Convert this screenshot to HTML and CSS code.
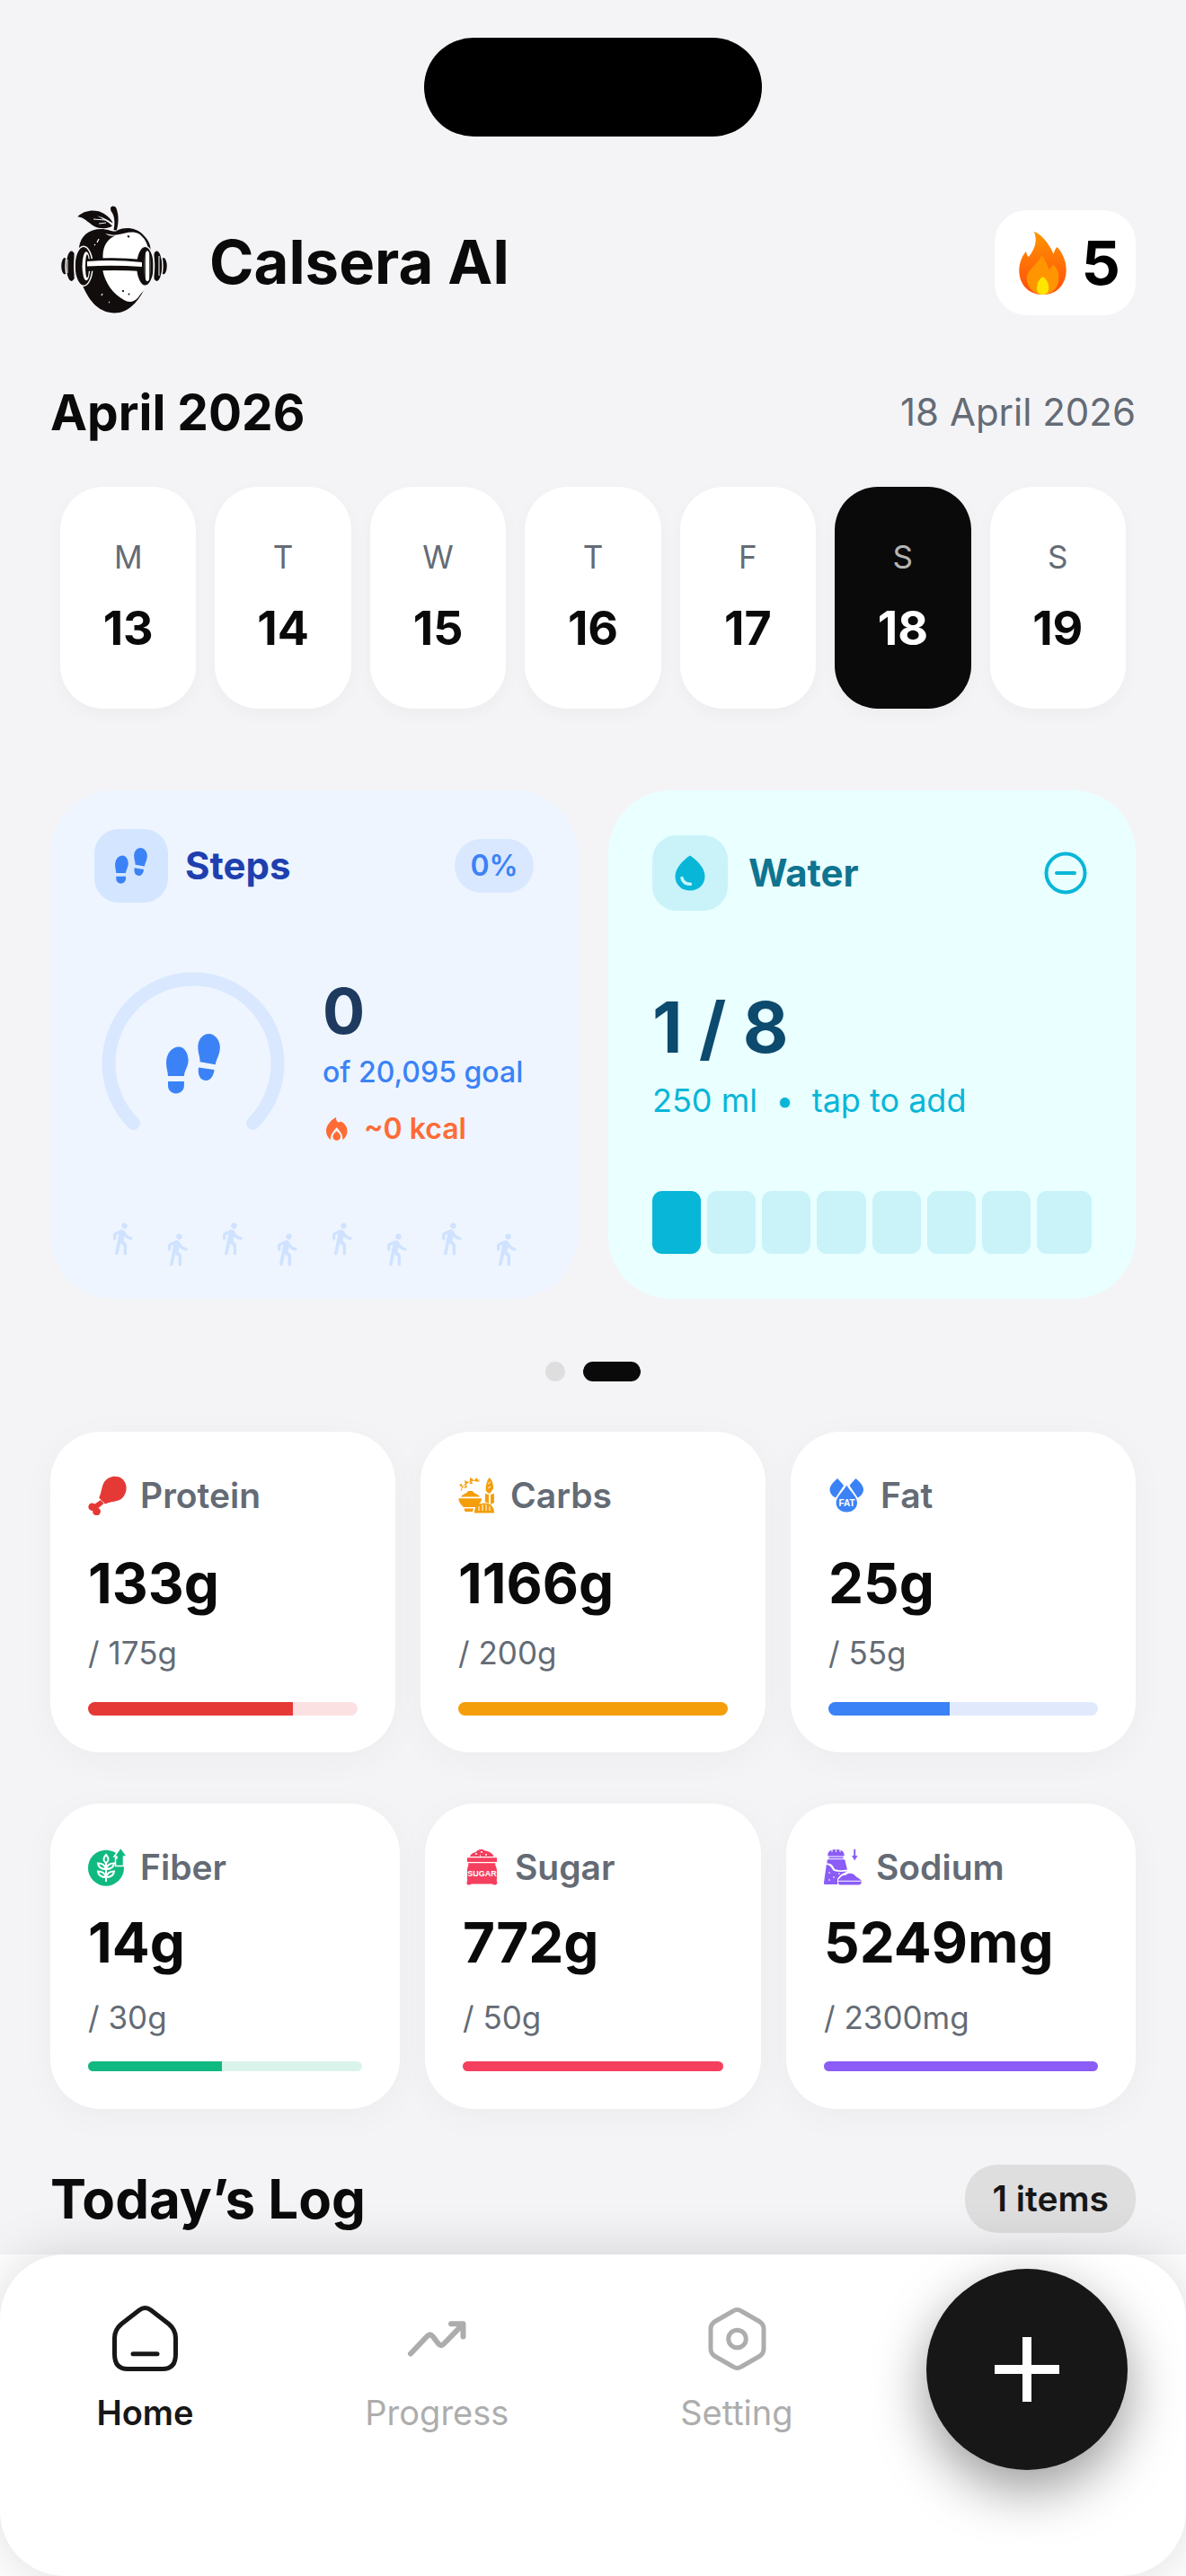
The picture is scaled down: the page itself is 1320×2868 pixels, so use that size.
FILE: index.html
```html
<!DOCTYPE html>
<html lang="en">
<head>
<meta charset="utf-8">
<meta name="viewport" content="width=device-width, initial-scale=1">
<title>Calsera AI</title>
<link rel="stylesheet" href="styles.css">
</head>
<body>
<svg class="sprite" aria-hidden="true">
  <symbol id="feet" viewBox="0 0 60 67">
    <path d="M14 14.4C20.500 14.400 24.600 22 24.600 29.700C24.600 36 20.500 40 19.900 47H2C1.800 42 0 38 0 32.400C0 21 7 14.400 14 14.400Z"/>
    <path d="M2 53H19.900V57.500C19.900 63 15.500 66.400 10.900 66.400C6 66.400 2 63 2 57.500Z"/>
    <path d="M47.500 0C54.500 0 60.500 8 59.800 16.300C59.500 23 56 28 54.700 34.300L37.700 31.200C37.700 26 35.300 21 35.300 15.200C35.300 7 40 0 47.500 0Z"/>
    <path d="M36 37.400L53.500 40C53 46.500 49.500 52 44.400 51.900C38.500 51.900 34.800 47 36 37.400Z"/>
  </symbol>
  <symbol id="walker" viewBox="0 0 24 24">
    <path d="M13.500 5.500c1.100 0 2-.9 2-2s-.9-2-2-2-2 .9-2 2 .9 2 2 2zM9.800 8.900 7.240 21.810c-.13.61.35 1.190.98 1.190h.08c.47 0 .87-.32.98-.78L10.900 15l2.100 2v5c0 .55.45 1 1 1s1-.45 1-1v-5.640c0-.55-.22-1.070-.62-1.450L12.900 13.500l.6-3c1.070 1.240 2.620 2.130 4.360 2.410.6.09 1.140-.39 1.140-1 0-.49-.36-.9-.84-.98-1.530-.25-2.800-1.150-3.460-2.330l-1-1.600c-.56-.89-1.680-1.250-2.660-.84L7.220 7.780C6.480 8.100 6 8.820 6 9.620V12c0 .55.45 1 1 1s1-.45 1-1V9.600l1.800-.7"/>
  </symbol>
</svg>

<div class="island" aria-hidden="true"></div>

<main class="page">
  <header class="topbar">
    <svg class="logo" viewBox="0 3 120 120" aria-hidden="true">
      <path d="M21 46C23 34 31 26 46 26C53 26 57 29 62 28.500C68 24 82 23 91 31C97 37 100 41 100.500 48L95 90C88 106 76 119.500 60.500 119.500C44 119 33 108 25 89L21 46Z" fill="#120d0d"/>
      <path d="M62 32.500C72 31 80 27 88 31.500C94 36 97 42 98 48V88C94 94 90 97 87 102C82 108 76 108 71 105C58 98 50 85 47.500 73V55C48 44 53 37 61 33.500C56 34 53 33 50 31C54 32 58 33 62 32.500Z" fill="#fff"/>
      <path d="M19.300 12.200C27 5 38 4 46 7.500C53 11 57 15 58.500 19.500C51 14 46 13 41 11C47 15 54 18 58 22.500C53 26 44 26 38 23C30 18 27 13 19.300 12.200Z" fill="#120d0d"/>
      <path d="M37 15L50 16M43 20L51 19" stroke="#f4f4f7" stroke-width="1" fill="none"/>
      <path d="M56 3C56 0 61-.5 62.500 3C65.500 11 65 20 62.800 27.500L59.500 27C61.500 17 60 10 56.500 6Z" fill="#120d0d"/>
      <g fill="#120d0d" stroke="#f4f4f7" stroke-width="1.500">
        <ellipse cx="5" cy="67.200" rx="4.500" ry="10"/><ellipse cx="12.500" cy="67.200" rx="6.500" ry="17.500"/>
        <ellipse cx="115" cy="67.200" rx="4.500" ry="10"/><ellipse cx="107.500" cy="67.200" rx="6.500" ry="17.500"/>
        <ellipse cx="26" cy="67.200" rx="10" ry="22"/><ellipse cx="94.500" cy="67.200" rx="10" ry="22"/>
      </g>
      <ellipse cx="29" cy="67.200" rx="4.500" ry="16" fill="#fff"/><ellipse cx="30" cy="67.200" rx="2" ry="13" fill="#120d0d"/>
      <ellipse cx="97" cy="67.200" rx="4" ry="17" fill="#fff"/><path d="M94 52V82M100 53V81" stroke="#120d0d" stroke-width="1.500"/>
      <path d="M30 59.500Q60 57 91 60V73Q60 71 30 73Z" fill="#120d0d"/>
      <path d="M30 62Q60 59.500 91 63V68Q60 66 30 67.500Z" fill="#fff"/>
      <path d="M8 60V75M16 54V80M104 53V81M110 56V78" stroke="#fff" stroke-width="1"/>
      <path d="M41 41L43 37M39 43L38 44M46 100L47 98M54 107.500H55" stroke="#fff" stroke-width="1.300"/>
      <path d="M75 33.500L77 35M70 94V96M76 98L77 99" stroke="#120d0d" stroke-width="1.800"/>
    </svg>
    <h1 class="brand">Calsera AI</h1>
    <button class="streak" type="button" aria-label="5 day streak">
      <svg class="streak-flame" viewBox="0 0 53 71" aria-hidden="true">
        <defs><linearGradient id="heat" x1="0" y1="0" x2="0" y2="1"><stop offset="0" stop-color="#ff9500"/><stop offset="1" stop-color="#ff4d0d"/></linearGradient></defs>
        <path fill="url(#heat)" d="M16.700.7C24 3 33 13 38.600 25.700C39.500 23 40 20.500 42.400 18C47 22 53 33 52.700 44C52.500 60 42 71 26.800 71C11 71 .3 60 .3 44C.3 36 3.500 28 7.900 23C8.500 25 9 27.500 10.800 29C16 23 22 12 16.700.7Z"/>
        <path fill="#ff9500" d="M25.200 27.300C29 32 32 38 34 44C35 41 36.500 39 38.200 37.700C42 41 44.500 45 44.500 51C44.500 64 37 70.500 26.800 71C16 70.500 8.800 63 8.800 53C8.800 43 21 38 25.200 27.300Z"/>
        <path fill="#ffe600" d="M26.800 51.300C30 53 33.200 58 33.200 63C33.200 68 31 71 26.800 71C22 71 20 68 20 63C20 58 23 53 26.800 51.300Z"/>
      </svg>
      <span>5</span>
    </button>
  </header>

  <section class="month">
    <h2 class="month-name">April 2026</h2>
    <time class="month-date" datetime="2026-04-18">18 April 2026</time>
  </section>

  <section class="days" aria-label="Week">
    <button class="day" type="button"><span>M</span><b>13</b></button>
    <button class="day" type="button"><span>T</span><b>14</b></button>
    <button class="day" type="button"><span>W</span><b>15</b></button>
    <button class="day" type="button"><span>T</span><b>16</b></button>
    <button class="day" type="button"><span>F</span><b>17</b></button>
    <button class="day day-active" type="button" aria-pressed="true"><span>S</span><b>18</b></button>
    <button class="day" type="button"><span>S</span><b>19</b></button>
  </section>

  <section class="trackers">
    <article class="card steps">
      <div class="card-head">
        <span class="chip-icon"><svg class="feet-small"><use href="#feet"/></svg></span>
        <h3>Steps</h3>
        <span class="percent">0%</span>
      </div>
      <div class="steps-body">
        <div class="gauge">
          <svg class="gauge-arc" viewBox="0 0 204 204" aria-hidden="true"><path d="M35.500 168.500A94 94 0 1 1 168.500 168.500"/></svg>
          <svg class="feet-large"><use href="#feet"/></svg>
        </div>
        <div class="steps-text">
          <p class="steps-count">0</p>
          <p class="steps-goal">of 20,095 goal</p>
          <p class="steps-kcal">
            <svg viewBox="0 0 24 26" aria-hidden="true"><path d="M11 0C11 3 12 5.500 14 5.500C15 5.500 15.500 5 16 4.500C20 6 23.500 10 23.500 15C23.500 19 21.500 23 18.200 25C18.700 21 18 18 11.700 11.300C5.500 18 4.700 21 5.200 25C2 23 0 19 0 15C0 9 5 3 11 0Z"/><path d="M11.700 15.300C14 17.500 16 19 16 21.500A4.300 4.300 0 0 1 7.400 21.500C7.400 19 9.500 17.500 11.700 15.300Z"/></svg>
            ~0 kcal
          </p>
        </div>
      </div>
      <div class="walkers" aria-hidden="true">
        <svg><use href="#walker"/></svg><svg><use href="#walker"/></svg><svg><use href="#walker"/></svg><svg><use href="#walker"/></svg>
        <svg><use href="#walker"/></svg><svg><use href="#walker"/></svg><svg><use href="#walker"/></svg><svg><use href="#walker"/></svg>
      </div>
    </article>

    <article class="card water">
      <div class="card-head">
        <span class="chip-icon"><svg class="drop" viewBox="0 0 34 40" aria-hidden="true"><path d="M17 .5C24 5 33.500 14 33.500 23.500C33.500 33 26.500 39.500 17 39.500S.5 33 .5 23.500C.5 14 10 5 17 .5Z" fill="#08b6d8"/><path d="M8 25.500C8.500 29.500 12.500 32.500 17.500 32.300" stroke="#c9f3f9" stroke-width="3.500" stroke-linecap="round" fill="none"/></svg></span>
        <h3>Water</h3>
        <button class="minus" type="button" aria-label="Remove a glass"><svg viewBox="0 0 48 48" aria-hidden="true"><circle cx="24" cy="24" r="21.500"/><path d="M14 24H34"/></svg></button>
      </div>
      <p class="water-count">1 / 8</p>
      <p class="water-hint">250 ml&nbsp; •&nbsp; tap to add</p>
      <div class="glasses"><i class="full"></i><i></i><i></i><i></i><i></i><i></i><i></i><i></i></div>
    </article>
  </section>

  <div class="pager" aria-hidden="true"><i></i><i class="on"></i></div>

  <section class="macros">
    <article class="macro red">
      <h3><svg viewBox="0 0 44 44" aria-hidden="true"><path d="M12.200 24.500C15 19 15 12 18 7C22 1 31-1.500 37.500 3C44 8 44.500 18 38 25C33 29.500 26 28 19 31.500Z"/><path d="M14 27L17.500 31L11.500 36A4.300 4.300 0 1 1 5.300 39A4.300 4.300 0 1 1 7.500 31.500Z"/></svg>Protein</h3>
      <p class="value">133g</p><p class="goal">/ 175g</p>
      <div class="bar"><i style="width:76%"></i></div>
    </article>
    <article class="macro amber">
      <h3><svg viewBox="0 0 44 44" aria-hidden="true"><path d="M3 17C5 10 12 4 24 5" fill="none" stroke="currentColor" stroke-width="1"/><path d="M1 10L5 14L4 9ZM7 5L8 11L11 7ZM13 2L13 7L17 4ZM20 2L18 6L23 7ZM6 14L10 13L9 10ZM12 9L16 9L15 6Z"/><path d="M3 23.500C5 20 10 20 11 17H16C17 20 22 20 24 23.500ZM.4 25.300H26C26 30 22 33 20 35H6C4 33 .4 30 .4 25.300ZM6.500 36.500H17L16 40H7.500ZM34.700 2C38 5 39 9 39.200 14L35.500 19.500H33L30.500 16C30.500 10 32 5 34.700 2ZM30 20L34 21V31L29.800 29ZM36 21L40 20V30L36 32ZM18 41.500C18 34 22 30.500 29 30.500S40 34 40 41.500Z"/><path d="M23 34V39M27 32V39M31 32V39M35 34V39M33 9L36 7M33 14L36 12" stroke="#fff" stroke-width="1" fill="none"/></svg>Carbs</h3>
      <p class="value">1166g</p><p class="goal">/ 200g</p>
      <div class="bar"><i style="width:100%"></i></div>
    </article>
    <article class="macro blue">
      <h3><svg viewBox="0 0 44 44" aria-hidden="true"><path d="M10 3C12 5 15 8 17 11L8 24.500C3 22 1.500 18 1.500 15C2 10 7 6 10 3ZM30.600 3C28.600 5 25.600 8 23.600 11L32.600 24.500C37.600 22 39 18 39 15C38.600 10 33.600 6 30.600 3ZM20.300 10.700C24 17 32 23 32 30C32 36 27 40.500 20.300 40.500S8.600 36 8.600 30C8.600 23 17 17 20.300 10.700Z"/><text x="20.500" y="33.500" text-anchor="middle" class="icon-text">FAT</text></svg>Fat</h3>
      <p class="value">25g</p><p class="goal">/ 55g</p>
      <div class="bar"><i style="width:45%"></i></div>
    </article>
  </section>

  <section class="macros macros-minor">
    <article class="macro green">
      <h3><svg viewBox="0 0 44 44" aria-hidden="true"><circle cx="20" cy="22.700" r="20"/><path d="M36.300 0L43.500 10H39.500V20.500H30.500V12H32V10H29Z" stroke="#fff" stroke-width="1.500"/><g fill="none" stroke="#fff" stroke-width="2"><path d="M20 38V17M20 8C16.500 12 16.500 14 20 17.500C23.500 14 23.500 12 20 8ZM20 24C13 24 11.500 21 11 17.500C17 17.500 19 20 20 24ZM20 24C27 24 28.500 21 29 17.500C23 17.500 21 20 20 24ZM20 33C13 33 11.500 30 11 26.500C17 26.500 19 29 20 33ZM20 33C27 33 28.500 30 29 26.500C23 26.500 21 29 20 33Z"/></g></svg>Fiber</h3>
      <p class="value">14g</p><p class="goal">/ 30g</p>
      <div class="bar"><i style="width:49%"></i></div>
    </article>
    <article class="macro rose">
      <h3><svg viewBox="0 0 44 44" aria-hidden="true"><path d="M8 10C9 6 13 6 15 4.500C17 1.500 22 1 25 3.500C29 4 33 6 34.500 10ZM5 11.300H38V16H5ZM6 17.200H36.500C35.500 20 38 22 38 25V35C37 37 40 40 37 41.500C34 42 34 40.500 32 40.500H11C9 40.500 8 42 5.500 41.500C3 40 6 37 5 35V25C5 22 7 20 6 17.200Z"/><path d="M14 7H16M20 5H22M25 8H27M19 9H20" stroke="#fff" stroke-width="1.500"/><text x="21.500" y="31.500" text-anchor="middle" class="icon-text">SUGAR</text></svg>Sugar</h3>
      <p class="value">772g</p><p class="goal">/ 50g</p>
      <div class="bar"><i style="width:100%"></i></div>
    </article>
    <article class="macro violet">
      <h3><svg viewBox="0 0 44 44" aria-hidden="true"><path d="M4.500 9.500C3.500 5 7 2 13.500 2S23.500 5 22.500 9.500ZM5.500 10.500H21.500V12.300H5.500ZM4 13.300H23.200L26 24.500C19 26 15 25 12 24C10 19 7 17 3.200 17.500ZM2.800 19C7 19 8.500 23 10.500 25.500C15 27.500 20 27 26 26.500L20 29.500C18 31 16 33 15 35V41H.8C0 41 0 40 0 39ZM16 35.500C19 34 20 30 24 31C27 28 29 29 31 29C34 29 35 33 38 33.500L41.500 36.500V40L39.500 41.500H17.500L16 40ZM33.200 2H35.200V9H37.500L34.200 14.500L31 9H33.200Z"/><path d="M9 2V5M13.500 2V5M18 2V5M5 28H7M10 33H12M5 36H7M16 29H18M15.500 37.300H41" stroke="#fff" stroke-width="1" fill="none"/></svg>Sodium</h3>
      <p class="value">5249mg</p><p class="goal">/ 2300mg</p>
      <div class="bar"><i style="width:100%"></i></div>
    </article>
  </section>

  <section class="log">
    <h2>Today’s Log</h2>
    <span class="log-count">1 items</span>
  </section>
</main>

<div class="dock">
  <nav class="nav">
    <div class="tabs">
      <a class="tab tab-active" href="#home" aria-current="page"><svg viewBox="0 0 80 80" aria-hidden="true"><path d="M34 8Q40.500 3 47 8L67 23.500Q74.500 30 74.500 39V57Q74.500 73.500 60 73.500H21Q6.500 73.500 6.500 57V39Q6.500 30 14 23.500ZM27 56.700H54"/></svg>Home</a>
      <a class="tab" href="#progress"><svg class="bold" viewBox="0 0 80 80" aria-hidden="true"><path d="M11 56.500L29.500 37Q32.500 34 35.500 37L42 45.500Q45 48.500 48 45.500L68 25M56 23.300H69.500V37.500"/></svg>Progress</a>
      <a class="tab" href="#setting"><svg viewBox="0 0 80 80" aria-hidden="true"><path d="M36 9Q40.500 6 45 9L65 20.500Q70 23.500 70 29V51Q70 56.500 65 59.500L45 71Q40.500 74 36 71L16 59.500Q11 56.500 11 51V29Q11 23.500 16 20.500Z"/><circle cx="40.500" cy="40" r="9.800"/></svg>Setting</a>
    </div>
    <button class="fab" type="button" aria-label="Add"><svg viewBox="0 0 72 72" aria-hidden="true"><path d="M36 0V72M0 36H72"/></svg></button>
  </nav>
</div>
</body>
</html>
```

FILE: styles.css
```css
* { box-sizing: border-box; }

body {
  margin: 0;
  min-height: 100vh;
  display: flex;
  flex-direction: column;
  background: #f4f4f7;
  color: #0a0a0a;
  font-family: Inter, "Liberation Sans", sans-serif;
}

h1, h2, h3, p { margin: 0; }
button { border: 0; padding: 0; font: inherit; color: inherit; cursor: pointer; }
a { color: inherit; text-decoration: none; }
svg { display: block; flex: none; }
.sprite { position: absolute; width: 0; height: 0; }

.island {
  width: 376px;
  height: 110px;
  margin: 42px auto 0;
  border-radius: 55px;
  background: #000;
}

.page { padding: 80px 56px 24px; }

/* Header */
.topbar { display: flex; align-items: center; height: 120px; }
.logo { width: 120px; height: 120px; margin-left: 11px; overflow: visible; }
.brand { margin-left: 46px; font-size: 67px; line-height: 80px; font-weight: 700; }
.streak {
  display: flex;
  align-items: center;
  gap: 17px;
  height: 117px;
  margin-left: auto;
  padding: 0 17px 0 27px;
  border-radius: 36px;
  background: #fff;
  color: #000;
  font-size: 68px;
  font-weight: 700;
}
.streak-flame { width: 53px; height: 71px; }

/* Month and week */
.month { display: flex; align-items: center; justify-content: space-between; margin-top: 75px; line-height: 64px; }
.month-name { font-size: 55px; font-weight: 700; }
.month-date { font-size: 42px; color: #646b75; }

.days { display: grid; grid-template-columns: repeat(7, 1fr); gap: 21px; margin-top: 51px; padding: 0 11px; }
.day {
  display: flex;
  flex-direction: column;
  align-items: center;
  gap: 30px;
  padding: 58px 0 59px;
  border-radius: 48px;
  background: #fff;
  box-shadow: 0 6px 20px rgba(0, 0, 0, .03);
}
.day span { font-size: 35px; line-height: 40px; color: #646b75; }
.day b { font-size: 52px; line-height: 60px; font-weight: 700; }
.day-active { background: #0a0a0a; color: #fff; }
.day-active span { color: #b5b5b5; }

/* Trackers */
.trackers { display: grid; grid-template-columns: 1fr 1fr; gap: 34px; margin-top: 91px; }
.card { display: flex; flex-direction: column; border-radius: 70px; }
.card-head { display: flex; align-items: center; }
.card-head h3 { font-size: 42px; line-height: 48px; font-weight: 700; }
.chip-icon { display: flex; align-items: center; justify-content: center; width: 84px; height: 84px; border-radius: 27px; }

.steps { padding: 43px 49px 35px; background: #eef5ff; }
.steps .chip-icon { width: 82px; height: 82px; background: #d4e6ff; }
.steps h3 { margin-left: 19px; color: #1e40af; }
.feet-small { width: 36px; height: 40px; fill: #3b82f6; }
.percent {
  margin-left: auto;
  width: 88px;
  border-radius: 30px;
  background: #d9e8ff;
  color: #3b82f6;
  font-size: 32px;
  line-height: 60px;
  font-weight: 600;
  text-align: center;
}
.steps-body { display: flex; align-items: center; gap: 42px; margin: 77px 0 69px 8px; }
.gauge { display: grid; place-items: center; }
.gauge > svg { grid-area: 1 / 1; }
.gauge-arc { width: 204px; height: 204px; fill: none; stroke: #d9e8ff; stroke-width: 15; stroke-linecap: round; }
.feet-large { width: 60px; height: 67px; fill: #3b82f6; }
.steps-text { white-space: nowrap; }
.steps-count { font-size: 70px; line-height: 70px; font-weight: 700; color: #1e3a5f; }
.steps-goal { margin-top: 13px; font-size: 32px; line-height: 40px; font-weight: 500; color: #3b82f6; }
.steps-kcal { display: flex; align-items: center; gap: 18px; margin-top: 23px; padding-left: 4px; font-size: 32px; line-height: 40px; font-weight: 600; color: #ff6b35; }
.steps-kcal svg { width: 24px; height: 26px; fill: currentColor; }
.walkers { display: grid; grid-template-columns: repeat(8, 1fr); justify-items: center; fill: #cfe2ff; }
.walkers svg { width: 40px; height: 40px; margin-top: 4px; }
.walkers svg:nth-child(even) { margin-top: 16px; }

.water { padding: 50px 49px; background: #eaffff; }
.water .chip-icon { background: #c9f3f9; }
.water h3 { margin-left: 23px; color: #0e7490; }
.drop { width: 34px; height: 40px; }
.minus { margin-left: auto; margin-right: 5px; background: none; }
.minus svg { width: 48px; height: 48px; fill: none; stroke: #08b6d8; stroke-width: 4; stroke-linecap: round; }
.water-count { margin-top: 90px; font-size: 78px; line-height: 80px; font-weight: 700; color: #0c4a6e; }
.water-hint { margin-top: 19px; font-size: 36px; line-height: 44px; color: #08b6d8; white-space: nowrap; }
.glasses { display: grid; grid-template-columns: repeat(8, 1fr); margin-top: 79px; }
.glasses i { height: 70px; margin-right: 7px; border-radius: 11px; background: #c9f3f9; }
.glasses i:last-child { margin-right: 0; }
.glasses .full { background: #08b6d8; }

.pager { display: flex; justify-content: center; gap: 20px; margin-top: 70px; }
.pager i { width: 22px; height: 22px; border-radius: 11px; background: #dededf; }
.pager .on { width: 64px; background: #0a0a0a; }

/* Macros */
.macros { display: grid; grid-template-columns: repeat(3, 1fr); gap: 28px; margin-top: 56px; }
.macro { padding: 48px 42px 41px; border-radius: 56px; background: #fff; box-shadow: 0 8px 40px rgba(0, 0, 0, .035); }
.macro h3 { display: flex; align-items: center; gap: 14px; font-size: 39px; line-height: 46px; font-weight: 600; color: #646b75; }
.macro svg { width: 44px; height: 44px; fill: currentColor; color: var(--tone); }
.icon-text { font: 700 10px "Liberation Sans", sans-serif; fill: #fff; }
.rose .icon-text { font-size: 9px; }
.value { margin-top: 40px; font-size: 62px; line-height: 70px; font-weight: 700; }
.goal { margin-top: 22px; font-size: 35px; line-height: 40px; color: #646b75; }
.bar { height: 15px; margin-top: 35px; border-radius: 8px; overflow: hidden; background: var(--track); }
.bar i { display: block; height: 100%; background: var(--tone); }

.macros-minor { grid-template-columns: 26fr 25fr 26fr; margin-top: 57px; }
.macros-minor .macro { padding-bottom: 42px; }
.macros-minor .value { margin-top: 26px; }
.macros-minor .goal { margin-top: 28px; }
.macros-minor .bar { height: 11px; margin-top: 29px; }

.red { --tone: #e53935; --track: #fce1e2; }
.amber { --tone: #f59e0b; --track: #fdf0d8; }
.blue { --tone: #3b82f6; --track: #e1eafd; }
.green { --tone: #10b981; --track: #dbf4eb; }
.rose { --tone: #f43f5e; --track: #fde2e7; }
.violet { --tone: #8b5cf6; --track: #eee7fe; }

.log { display: flex; align-items: center; justify-content: space-between; margin-top: 62px; }
.log h2 { font-size: 60px; line-height: 72px; font-weight: 700; }
.log-count { padding: 0 30px; border-radius: 36px; background: #dededf; color: #171717; font-size: 39px; line-height: 76px; font-weight: 600; }

/* Bottom navigation */
.dock { position: sticky; bottom: 0; margin-top: auto; background: #fff; }
.nav {
  display: flex;
  align-items: flex-start;
  gap: 53px;
  height: 358px;
  padding: 16px 65px 0 12px;
  border-radius: 72px;
  background: #fff;
  box-shadow: 0 0 60px rgba(0, 0, 0, .15);
}
.tabs { flex: 1; display: flex; justify-content: space-around; padding-top: 38px; }
.tab { display: flex; flex-direction: column; align-items: center; gap: 18px; font-size: 38px; line-height: 48px; color: #adadad; }
.tab svg { width: 80px; height: 80px; fill: none; stroke: currentColor; stroke-width: 5; stroke-linecap: round; stroke-linejoin: round; }
.tab .bold { stroke-width: 6; }
.tab-active { color: #171717; font-weight: 600; }
.fab {
  display: grid;
  place-items: center;
  width: 224px;
  height: 224px;
  border-radius: 50%;
  background: #171717;
  box-shadow: 0 22px 60px rgba(0, 0, 0, .4);
}
.fab svg { width: 72px; height: 72px; stroke: #fff; stroke-width: 10; }
```
